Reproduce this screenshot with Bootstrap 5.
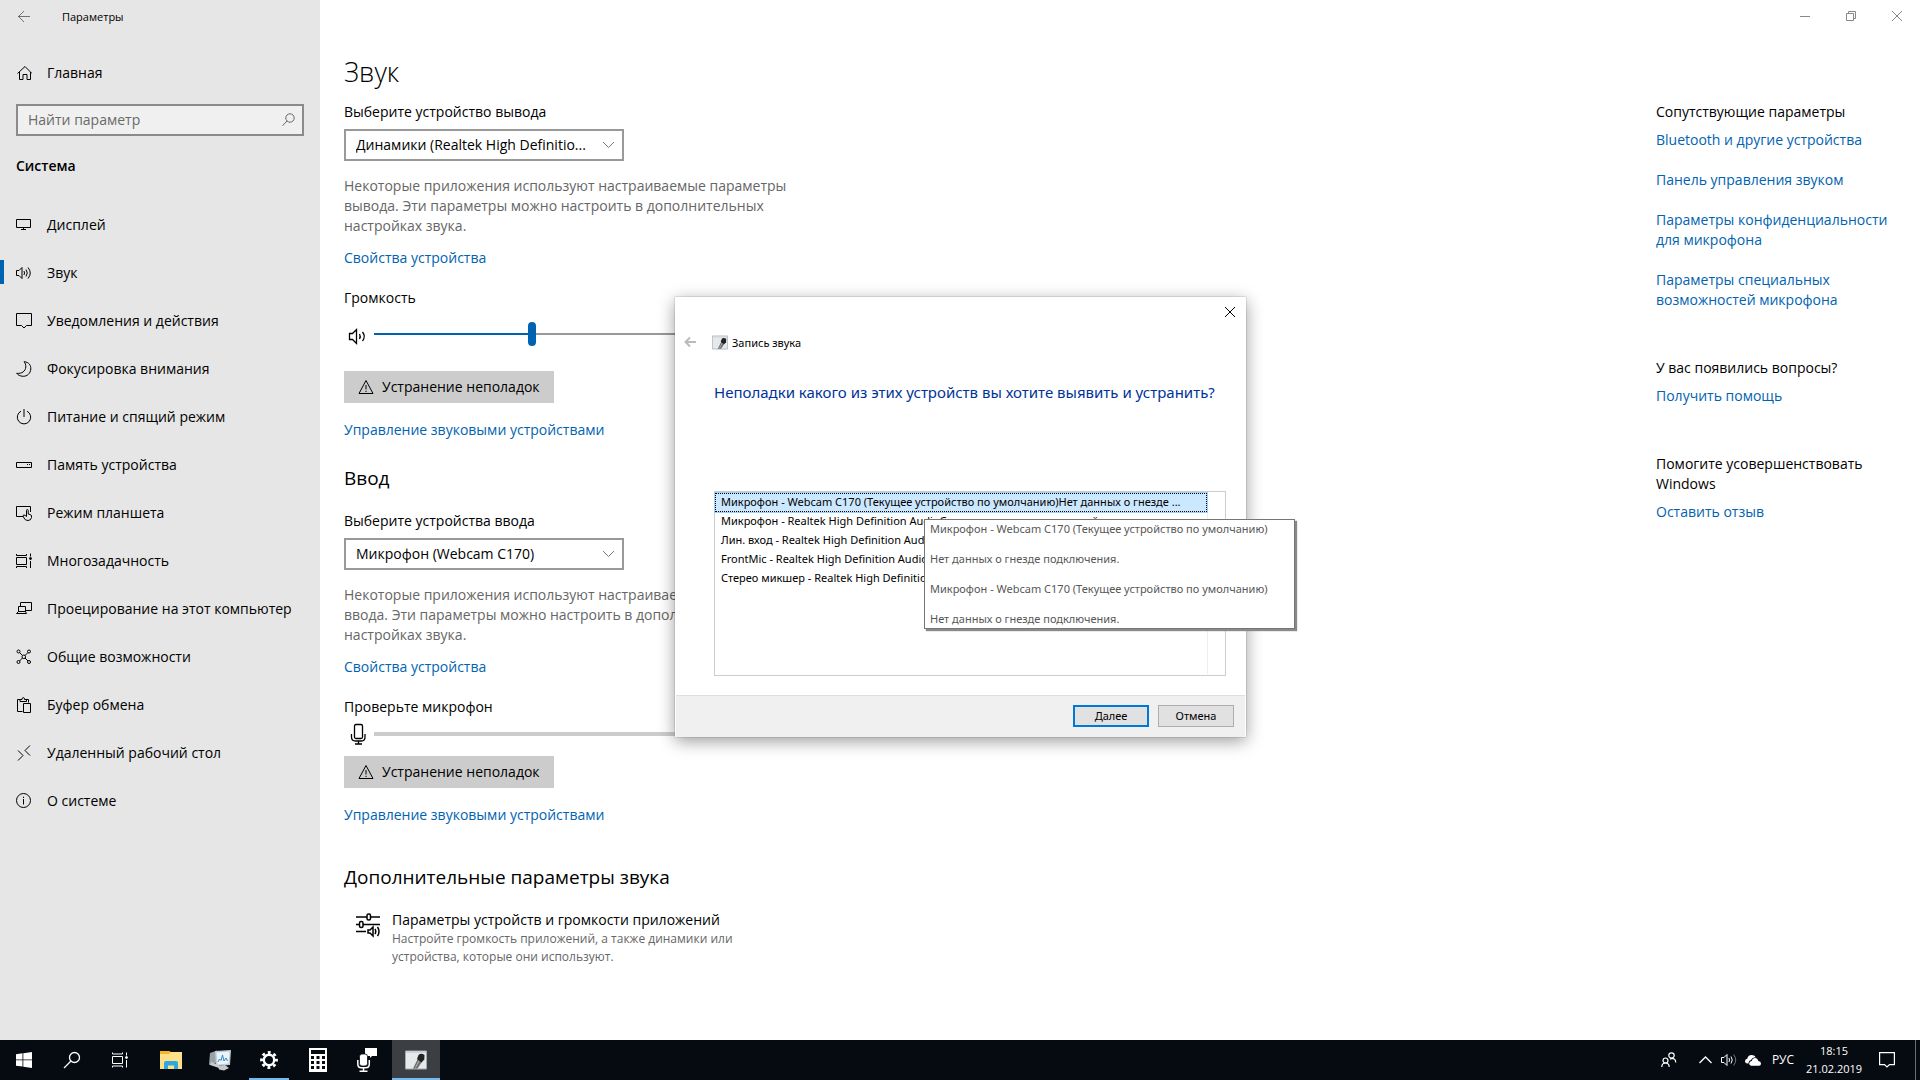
<!DOCTYPE html>
<html lang="ru">
<head>
<meta charset="utf-8">
<meta name="viewport" content="width=device-width, initial-scale=1">
<title>Параметры</title>
<link href="https://cdn.jsdelivr.net/npm/bootstrap@5.3.0/dist/css/bootstrap.min.css" rel="stylesheet">
<style>
  :root { --accent: #0063b1; --ui: "Open Sans", "Noto Sans", sans-serif; --dlg: "Noto Sans", "Open Sans", sans-serif; }
  body { font-family: var(--ui); font-size: 14px; line-height: 20px; color: #000; background: #fff; }
  svg { flex: none; display: block; fill: none; stroke: currentColor; }
  a { color: var(--accent); text-decoration: none; }
  p, h1, h2, h3 { margin: 0; }
  button { font-family: var(--ui); }

  .side-pane { width: 320px; background: #e6e6e6; }
  .win-title { height: 32px; font-size: 11px; padding: 2px 0 0 16px; gap: 30px; }
  .side-link { height: 48px; color: #000; padding: 2px 16px 0; gap: 15px; position: relative; }
  .side-link svg { width: 16px; height: 16px; }
  .side-link.active::before { content: ""; position: absolute; left: 0; top: 12px; width: 4px; height: 24px; background: var(--accent); }
  .home-link { height: 48px; margin-top: 16px; }
  .search-box { margin: 8px 16px 0; height: 32px; border: 2px solid #8a8a8a; background: #f0f0f0; padding-right: 7px; }
  .search-box input { border: 0; background: none; outline: 0; padding: 0 10px 2px; width: 100%; height: 28px; }
  .search-box input::placeholder { color: #6a6a6a; opacity: 1; }
  .side-head { font-size: 14px; line-height: 20px; font-weight: 600; padding: 20px 16px 24px; }

  .settings-main { padding: 54px 0 0 24px; width: 480px; }
  .settings-main h1 { font-size: 27px; line-height: 36px; font-weight: 300; }
  .settings-main h2 { font-size: 19px; line-height: 24px; font-weight: 400; }
  .win-select { width: 280px; height: 32px; border: 2px solid #999; border-radius: 0; background: #fff; color: #000; padding: 0 10px; appearance: none; font-family: var(--ui); font-size: 14px; }
  .select-wrap { width: 280px; margin-top: 7px; position: relative; }
  .select-wrap svg { position: absolute; right: 9px; top: 12px; pointer-events: none; color: #777; }
  .hint-text { color: #666; margin-top: 15px; }
  .props-link { display: block; margin-top: 12px; }
  .level-label { display: block; margin-top: 20px; }
  .vol-row { margin-top: 14px; margin-bottom: 25px; }
  .mic-row { margin-top: 5px; margin-bottom: 10px; }
  .vol-range { appearance: none; width: 316px; height: 24px; margin: 0; background: linear-gradient(to right, var(--accent) 50%, #999 50%) center / 100% 2px no-repeat; }
  .vol-range::-webkit-slider-thumb { appearance: none; width: 8px; height: 24px; border-radius: 4px; background: var(--accent); }
  .mic-level { width: 316px; height: 4px; border-radius: 0; background: #ccc; }
  .fix-btn { width: 210px; height: 32px; border: 0; background: #ccc; color: #000; padding: 0 14px; gap: 8px; white-space: nowrap; }
  .manage-link { display: block; margin-top: 17px; }
  .input-part { margin-top: 26px; }
  .input-part label { display: block; margin-top: 21px; }
  .more-part { margin-top: 40px; }
  .app-volume { margin-top: 21px; padding-left: 12px; gap: 12px; color: #000; }
  .app-volume svg { margin-top: 3px; }
  .sub-text { font-size: 12px; line-height: 18px; color: #666; }

  .related { width: 264px; }
  .win-controls { height: 32px; margin-right: 17px; gap: 34px; color: #888; }
  .win-controls button, .plain-btn { border: 0; background: none; padding: 0; color: inherit; }
  .related-body { padding: 70px 20px 0 0; }
  .related-body h3 { font-size: 14px; line-height: 20px; font-weight: 400; }
  .related-body a { display: block; margin-top: 20px; }
  .related-body h3 + a { margin-top: 8px; }
  .related-body a + h3 { margin-top: 48px; }

  .wizard { position: absolute; left: 675px; top: 297px; width: 571px; background: #fff; box-shadow: 0 4px 16px rgba(0,0,0,.4), 0 0 1px rgba(0,0,0,.5); font-family: var(--dlg); font-size: 11px; line-height: 15px; }
  .wizard-close { height: 30px; padding-right: 10px; }
  .wizard-head { height: 32px; padding: 0 0 2px 9px; }
  .wizard-back { color: #bbb; }
  .wizard h2 { font-size: 15px; line-height: 20px; color: #003399; font-weight: 400; white-space: nowrap; }
  .wizard-body { padding: 23px 20px 19px 39px; }
  .device-list { margin-top: 89px; height: 185px; border: 1px solid #ccc; position: relative; padding: 1px 0; }
  .device-list .list-area { width: 493px; height: 181px; border-right: 1px solid #ededf2; }
  .device-row { display: block; width: 492px; height: 19px; border: 1px solid transparent; background: none; text-align: left; padding: 0 5px 2px; font-family: var(--dlg); font-size: 11px; line-height: 15px; color: #000; white-space: nowrap; overflow: hidden; }
  .device-row.selected { background: #cce8ff; border: 1px dotted #000; outline: 1px solid #99d1ff; }
  .wizard-tip { position: absolute; left: 209px; top: 27px; width: 371px; height: 110px; border: 1px solid #767676; background: #fff; box-shadow: 2px 2px 1px #8a8a8a; color: #575757; padding: 1px 5px; white-space: nowrap; z-index: 2; display: flex; flex-direction: column; gap: 15px; }
  .wizard-foot { height: 42px; border-top: 1px solid #dfdfdf; background: #f0f0f0; padding: 0 11px 2px; gap: 9px; margin: 0 1px; }
  .dlg-btn { width: 76px; height: 22px; border: 1px solid #adadad; background: #e1e1e1; color: #000; font-family: var(--dlg); font-size: 11px; line-height: 15px; padding: 0; }
  .dlg-btn.primary { border: 2px solid #0078d7; }

  .task-bar { height: 40px; background: #060a11; color: #fff; }
  .task-bar button { border: 0; background: none; color: #fff; width: 48px; height: 40px; padding: 0; display: flex; align-items: center; justify-content: center; position: relative; }
  .task-apps { gap: 1px; margin-left: 3px; }
  .task-bar .running::after { content: ""; position: absolute; left: 4px; right: 4px; bottom: 0; height: 2px; background: #76b9ed; }
  .task-bar .focused { background: #3b3f44; }
  .task-bar .focused::after { left: 0; right: 0; }
  .task-bar .tray-btn { width: 24px; }
  .task-bar .people-btn { width: 48px; }
  .task-bar .lang-btn { width: 36px; font-size: 12px; }
  .task-bar .clock-btn { width: 66px; font-size: 11px; line-height: 18px; }
  .task-bar .action-btn { width: 40px; margin-right: 8px; }
  .desk-edge { width: 5px; border-left: 1px solid #6b6e72; }
</style>
</head>
<body class="vh-100 overflow-hidden d-flex flex-column">

<svg width="0" height="0" class="position-absolute" aria-hidden="true">
  <symbol id="warn" viewBox="0 0 16 16"><path d="M8 1.5L15 14.5H1Z M8 6v4.5M8 11.8v1.2"/></symbol>
  <symbol id="chev" viewBox="0 0 12 8"><path d="M.5 1L6 6.5L11.500 1"/></symbol>
  <symbol id="mic-app" viewBox="0 0 22 20">
    <path d="M.5 1h21v18H.5z" fill="#e6e9ea" stroke="#a5a9ad"/><path d="M1 1.500h20v1.500H1z" fill="#cfd4d8" stroke="none"/>
    <path d="M8 18.500L13 8.500L17.500 11L12.500 18.500Z" fill="#6d6d6d" stroke="none"/><path d="M12 9L13.500 5Q16 2.500 19.500 5L19.300 9.500L16.500 12.500Z" fill="#222" stroke="none"/><path d="M10.500 17.500l3.500-6.500" stroke="#bbb" stroke-width="1"/>
  </symbol>
</svg>

<div class="d-flex flex-grow-1 overflow-hidden">
  <nav class="side-pane flex-shrink-0" aria-label="Система">
    <div class="win-title d-flex align-items-center">
      <button class="plain-btn text-black-50" aria-label="Назад"><svg width="16" height="14" viewBox="0 0 16 14"><path d="M2.500 6.500H14M8 1L2.500 6.500L8 12"/></svg></button>
      <span>Параметры</span>
    </div>
    <a href="#" class="side-link home-link d-flex align-items-center"><svg viewBox="0 0 16 16"><path d="M1.500 8.500L9 1.500L16 8.500M3.500 7v7.500h3.500v-5h4v5h3.500V7"/></svg>Главная</a>
    <div class="search-box d-flex align-items-center">
      <input type="search" placeholder="Найти параметр" aria-label="Найти параметр">
      <svg width="13" height="14" viewBox="0 0 13 14" color="#666"><circle cx="8" cy="5" r="4.200"/><path d="M5 8L.5 12.800"/></svg>
    </div>
    <h2 class="side-head">Система</h2>
    <a href="#" class="side-link d-flex align-items-center"><svg viewBox="0 0 16 16"><path d="M.5 2.500h14v8h-14zM7.500 10.500v2M5 12.500h5"/></svg>Дисплей</a>
    <a href="#" class="side-link active d-flex align-items-center"><svg viewBox="0 0 16 16"><path d="M.5 5.500h2.500L6 2.500v11L3 10.500H.5zM8 6q1 2 0 4M10 4.500q2.500 3.500 0 7M12 2.500q4.500 5.500 0 11"/></svg>Звук</a>
    <a href="#" class="side-link d-flex align-items-center"><svg viewBox="0 0 16 16"><path d="M.5.5h15v12H10.500L8 15L5.500 12.500H.5z"/></svg>Уведомления и действия</a>
    <a href="#" class="side-link d-flex align-items-center"><svg viewBox="0 0 16 16"><path d="M8 .7C13 1 15 4.500 14.800 8C14.500 12.500 11 15.300 7.500 15.300C4 15.300 2 14 .7 12.300C6 13 9.500 10 9.800 6C9.900 4 9.300 2 8 .7Z"/></svg>Фокусировка внимания</a>
    <a href="#" class="side-link d-flex align-items-center"><svg viewBox="0 0 16 16"><path d="M5 2.200A6.700 6.700 0 1 0 11 2.200M8 0v8"/></svg>Питание и спящий режим</a>
    <a href="#" class="side-link d-flex align-items-center"><svg viewBox="0 0 16 16"><path d="M.5 5.500h15v5h-15zM11 7.500h1M13 7.500h1"/></svg>Память устройства</a>
    <a href="#" class="side-link d-flex align-items-center"><svg viewBox="0 0 16 16"><path d="M7 11.500H.5v-10h14V7M10.500 11.500V5.500q0-1 .8-1t.9 1V9l2 .5q1.300.4 1.300 1.500v1.500q-.5 3-3.500 3t-4-2.500L7 11q0-1 1-1t2.500 1.500"/></svg>Режим планшета</a>
    <a href="#" class="side-link d-flex align-items-center"><svg viewBox="0 0 16 16"><path d="M.5 4.500h10v7H.5zM.5 1v1.500h10V1M.5 15v-1.500h10V15M14.500.5v3M14.500 8v7"/><circle cx="14.500" cy="5.500" r="1" fill="currentColor"/></svg>Многозадачность</a>
    <a href="#" class="side-link d-flex align-items-center"><svg viewBox="0 0 16 16"><path d="M4.500 5.500v-4h11v8h-6M2.500 10.500v-5h7v5zM.5 12.500h10l-1-2h-7z"/></svg>Проецирование на этот компьютер</a>
    <a href="#" class="side-link d-flex align-items-center"><svg viewBox="0 0 16 16"><circle cx="2.500" cy="2.500" r="1.500"/><circle cx="13" cy="2.500" r="1.500"/><circle cx="2.500" cy="13" r="1.500"/><circle cx="13" cy="13" r="1.500"/><circle cx="7.800" cy="7.800" r="1.800"/><path d="M3.500 3.500l3 3M12 3.500l-3 3M3.500 12l3-3M12 12l-3-3"/></svg>Общие возможности</a>
    <a href="#" class="side-link d-flex align-items-center"><svg viewBox="0 0 16 16"><path d="M6.500 14.500h-5v-12h3M10 2.500h2.500v3M4 4.500v-2h2q0-2 1.300-2t1.200 2h2v2zM7.500 6.500h7v9h-7z"/></svg>Буфер обмена</a>
    <a href="#" class="side-link d-flex align-items-center"><svg viewBox="0 0 16 16"><path d="M2 5.500l5 5L2 15.500M14 .5L9 5.500l5 5"/></svg>Удаленный рабочий стол</a>
    <a href="#" class="side-link d-flex align-items-center"><svg viewBox="0 0 16 16"><circle cx="7.500" cy="7.500" r="7"/><path d="M7.500 6v5.500M7.500 3.700v1.300"/></svg>О системе</a>
  </nav>

  <main class="settings-main flex-shrink-0">
    <h1>Звук</h1>
    <section class="mt-2">
      <label for="outDev" class="d-block pt-1">Выберите устройство вывода</label>
      <div class="select-wrap">
        <select id="outDev" class="win-select"><option>Динамики (Realtek High Definitio...</option></select>
        <svg width="13" height="8"><use href="#chev"/></svg>
      </div>
      <p class="hint-text">Некоторые приложения используют настраиваемые параметры вывода. Эти параметры можно настроить в дополнительных настройках звука.</p>
      <a href="#" class="props-link">Свойства устройства</a>
      <label for="vol" class="level-label">Громкость</label>
      <div class="vol-row d-flex align-items-center">
        <svg width="30" height="24" viewBox="0 0 30 24" stroke-width="1.300"><path d="M5.500 11.500h3l4-4v14l-4-4h-3zM15.500 12q1.500 2.500 0 5M18.500 10q3.500 4.500 0 9"/></svg>
        <input type="range" id="vol" class="vol-range" min="0" max="100" value="50">
      </div>
      <button class="fix-btn d-flex align-items-center"><svg width="16" height="16"><use href="#warn"/></svg>Устранение неполадок</button>
      <a href="#" class="manage-link">Управление звуковыми устройствами</a>
    </section>

    <section class="input-part">
      <h2>Ввод</h2>
      <label for="inDev">Выберите устройства ввода</label>
      <div class="select-wrap">
        <select id="inDev" class="win-select"><option>Микрофон (Webcam C170)</option></select>
        <svg width="13" height="8"><use href="#chev"/></svg>
      </div>
      <p class="hint-text">Некоторые приложения используют настраиваемые параметры ввода. Эти параметры можно настроить в дополнительных настройках звука.</p>
      <a href="#" class="props-link">Свойства устройства</a>
      <p class="level-label">Проверьте микрофон</p>
      <div class="mic-row d-flex align-items-center">
        <svg width="30" height="24" viewBox="0 0 30 24" stroke-width="1.300"><path d="M10.500 4q0-1.500 1.500-1.500h5q1.500 0 1.500 1.500v11q0 1.500-1.500 1.500h-5q-1.500 0-1.500-1.500zM7.500 12v3q0 4 4 4h6q3.500 0 3.500-4V12M14.500 19v3M11 22h7"/></svg>
        <div class="progress mic-level" role="progressbar" aria-label="Уровень микрофона"></div>
      </div>
      <button class="fix-btn d-flex align-items-center"><svg width="16" height="16"><use href="#warn"/></svg>Устранение неполадок</button>
      <a href="#" class="manage-link">Управление звуковыми устройствами</a>
    </section>

    <section class="more-part">
      <h2>Дополнительные параметры звука</h2>
      <a href="#" class="app-volume d-flex">
        <svg width="24" height="25" viewBox="0 0 24 25" stroke-width="1.500"><path d="M0 4h11M15 4h9M0 11.500h3M7 11.500h17M0 18.500h10"/><rect x="11" y="1" width="3.500" height="6" rx="1.500"/><rect x="3.500" y="8.500" width="3.500" height="6" rx="1.500"/><path d="M12 17h2l3-3v9l-3-3h-2zM19 16q1.500 2.500 0 5M21.500 14q3 4.500 0 9"/></svg>
        <span><span class="d-block">Параметры устройств и громкости приложений</span><span class="sub-text d-block">Настройте громкость приложений, а также динамики или<br>устройства, которые они используют.</span></span>
      </a>
    </section>
  </main>

  <aside class="related ms-auto flex-shrink-0">
    <div class="win-controls d-flex justify-content-end align-items-center">
      <button aria-label="Свернуть"><svg width="12" height="12"><path d="M1 6.500h10"/></svg></button>
      <button aria-label="Восстановить"><svg width="12" height="12"><path d="M1.500 3.500h7v7h-7zM3.500 3.500v-2h7v7h-2"/></svg></button>
      <button aria-label="Закрыть"><svg width="12" height="12"><path d="M1 1l10 10M11 1L1 11"/></svg></button>
    </div>
    <div class="related-body">
      <h3>Сопутствующие параметры</h3>
      <a href="#">Bluetooth и другие устройства</a>
      <a href="#">Панель управления звуком</a>
      <a href="#">Параметры конфиденциальности<br>для микрофона</a>
      <a href="#">Параметры специальных<br>возможностей микрофона</a>
      <h3>У вас появились вопросы?</h3>
      <a href="#">Получить помощь</a>
      <h3>Помогите усовершенствовать<br>Windows</h3>
      <a href="#">Оставить отзыв</a>
    </div>
  </aside>
</div>

<div class="wizard" role="dialog" aria-label="Запись звука">
  <div class="wizard-close d-flex justify-content-end align-items-center"><button class="plain-btn" aria-label="Закрыть"><svg width="12" height="12"><path d="M1 1l10 10M11 1L1 11"/></svg></button></div>
  <div class="wizard-head d-flex align-items-center">
    <button class="plain-btn wizard-back" aria-label="Назад"><svg width="12" height="12" stroke-width="2"><path d="M1.500 6H12M6 1.500L1.500 6L6 10.500"/></svg></button>
    <svg width="16" height="15" class="ms-3"><use href="#mic-app"/></svg>
    <span class="ms-1">Запись звука</span>
  </div>
  <div class="wizard-body">
    <h2>Неполадки какого из этих устройств вы хотите выявить и устранить?</h2>
    <div class="device-list">
      <div class="list-area">
        <button class="device-row selected">Микрофон - Webcam C170 (Текущее устройство по умолчанию)Нет данных о гнезде ...</button>
        <button class="device-row">Микрофон - Realtek High Definition AudioСоединитель на материнской плате</button>
        <button class="device-row">Лин. вход - Realtek High Definition Audio</button>
        <button class="device-row">FrontMic - Realtek High Definition Audio</button>
        <button class="device-row">Стерео микшер - Realtek High Definition Audio</button>
      </div>
      <div class="wizard-tip" role="tooltip">
        <span>Микрофон - Webcam C170 (Текущее устройство по умолчанию)</span>
        <span>Нет данных о гнезде подключения.</span>
        <span>Микрофон - Webcam C170 (Текущее устройство по умолчанию)</span>
        <span>Нет данных о гнезде подключения.</span>
      </div>
    </div>
  </div>
  <div class="wizard-foot d-flex justify-content-end align-items-center">
    <button class="dlg-btn primary">Далее</button>
    <button class="dlg-btn">Отмена</button>
  </div>
</div>

<footer class="task-bar d-flex flex-shrink-0">
  <button aria-label="Пуск"><svg width="16" height="16" viewBox="0 0 16 16"><path d="M0 2.200L6.500 1.300V7.500H0zM7.300 1.200L16 0v7.500H7.300zM0 8.300h6.500v6.300L0 13.700zM7.300 8.300H16V16l-8.700-1.200z" fill="#fff" stroke="none"/></svg></button>
  <button aria-label="Поиск"><svg width="18" height="18" viewBox="0 0 18 18" stroke-width="1.300"><circle cx="11.500" cy="6.500" r="5"/><path d="M8 10L1 17"/></svg></button>
  <button aria-label="Представление задач"><svg width="16" height="16" viewBox="0 0 16 16"><path d="M.5 4.500h10v7H.5zM.5.5v1.500h10V.5M.5 15.500v-1.500h10v1.500M14.500.5v3M14.500 8v7.500"/><circle cx="14.500" cy="5.500" r="1" fill="#fff"/></svg></button>
  <div class="task-apps d-flex">
    <button aria-label="Проводник"><svg width="22" height="19" viewBox="0 0 22 19"><path d="M0 1q0-1 1-1h8l1.500 1H22v17H0z" fill="#ffe08a" stroke="none"/><path d="M0 1q0-1 1-1h8l1.500 1L9 3H0z" fill="#f5b81c" stroke="none"/><path d="M4 18v-6q0-2 2-2h10q2 0 2 2v6h-4v-3.500H8V18z" fill="#2fa9dd" stroke="none"/></svg></button>
    <button aria-label="Монитор"><svg width="24" height="22" viewBox="0 0 24 22"><path d="M2 4L9 1.500L8 14L1 16z" fill="#9aa2a7" stroke="none"/><path d="M3 13l8 3v3l-9-3z" fill="#c9cdd0" stroke="none"/><path d="M10 17l7-1 4 3-5 2.500-5-1z" fill="#c7cacc" stroke="none"/><path d="M7 2L23 1L22 16L8 17z" fill="#c3ccd2" stroke="none"/><path d="M8.500 3.500L21.500 2.500L20.500 14.500L9.500 15.500z" fill="#eaf5fb" stroke="none"/><path d="M10 13l1.500-3 1.500 1.500L14.500 6l1.500 6 2-3 1.500 3" stroke="#3488c8"/></svg></button>
    <button class="running" aria-label="Параметры"><svg width="18" height="18" viewBox="0 0 18 18"><circle cx="9" cy="9" r="5.200" stroke-width="2.400"/><circle cx="9" cy="9" r="7.500" stroke-width="2.800" stroke-dasharray="2.900 2.990" stroke-dashoffset="1.450"/></svg></button>
    <button aria-label="Калькулятор"><svg width="18" height="24" viewBox="0 0 18 24"><path d="M0 0h18v24H0z" fill="#fff" stroke="none"/><path d="M2 2h14v4H2z" fill="#060a11" stroke="none"/><path d="M2 9.500h14M2 14.500h14M2 19.500h14" stroke="#060a11" stroke-width="3" stroke-dasharray="3 2.500"/></svg></button>
    <button aria-label="Диктофон"><svg width="20" height="24" viewBox="0 0 20 24"><path d="M8 0h12v8h-5l-2 2V8H8z" fill="#fff" stroke="none"/><rect x="2.500" y="6" width="8" height="12" rx="2.500" fill="#fff" stroke="#060a11" stroke-width=".8"/><path d="M.8 12v4q0 3.800 3.500 3.800h4.500q3.500 0 3.500-3.800V12M6.500 20v3M2.500 23.200h8" stroke-width="1.500"/></svg></button>
    <button class="running focused" aria-label="Запись звука"><svg width="22" height="20"><use href="#mic-app"/></svg></button>
  </div>
  <div class="d-flex ms-auto">
    <button class="people-btn" aria-label="Люди"><svg width="16" height="16" viewBox="0 0 16 16" stroke-width="1.200"><circle cx="10.500" cy="3.500" r="2.700"/><circle cx="4.500" cy="8.500" r="2.500"/><path d="M.8 15q0-4 3.700-4t3.700 4M9 7.300l1.500-.9q4.200 0 4.200 4"/></svg></button>
    <button class="tray-btn" aria-label="Скрытые значки"><svg width="13" height="8"><path d="M.5 7L6.500 1L12.500 7" stroke-width="1.300"/></svg></button>
    <button class="tray-btn" aria-label="Громкость"><svg width="16" height="16" viewBox="0 0 16 16"><path d="M.5 5.500h2.500L6 2.500v11L3 10.500H.5zM8 6q1 2 0 4M10 4.500q2.500 3.500 0 7"/><path d="M12.500 2.500q4.500 5.500 0 11" stroke="#777"/></svg></button>
    <button class="tray-btn" aria-label="OneDrive"><svg width="16" height="11" viewBox="0 0 16 11"><path d="M3.500 8.500Q0 9 0 6.200Q0 4 2.200 3.800Q3 0 6.500 0Q9.500 0 10.800 2.200Q7 2.500 6 5Q3.500 5.500 3.500 8.500Z" fill="#fff" stroke="none"/><path d="M6.200 10.700Q4.200 10.500 4.200 8.500Q4.300 6.200 6.700 6Q7.500 3 10.200 3Q12.800 3.200 13.300 6Q16 6.300 16 8.500T14 10.700Z" fill="#fff" stroke="none"/></svg></button>
    <button class="lang-btn">РУС</button>
    <button class="clock-btn flex-column"><span>18:15</span><span>21.02.2019</span></button>
    <button class="action-btn" aria-label="Центр уведомлений"><svg width="16" height="16" viewBox="0 0 16 16" stroke-width="1.200"><path d="M.6.6h14.800v12H10.500L8 15L5.500 12.600H.6z"/></svg></button>
    <div class="desk-edge"></div>
  </div>
</footer>
<script src="https://cdn.jsdelivr.net/npm/bootstrap@5.3.0/dist/js/bootstrap.bundle.min.js"></script>
</body>
</html>
